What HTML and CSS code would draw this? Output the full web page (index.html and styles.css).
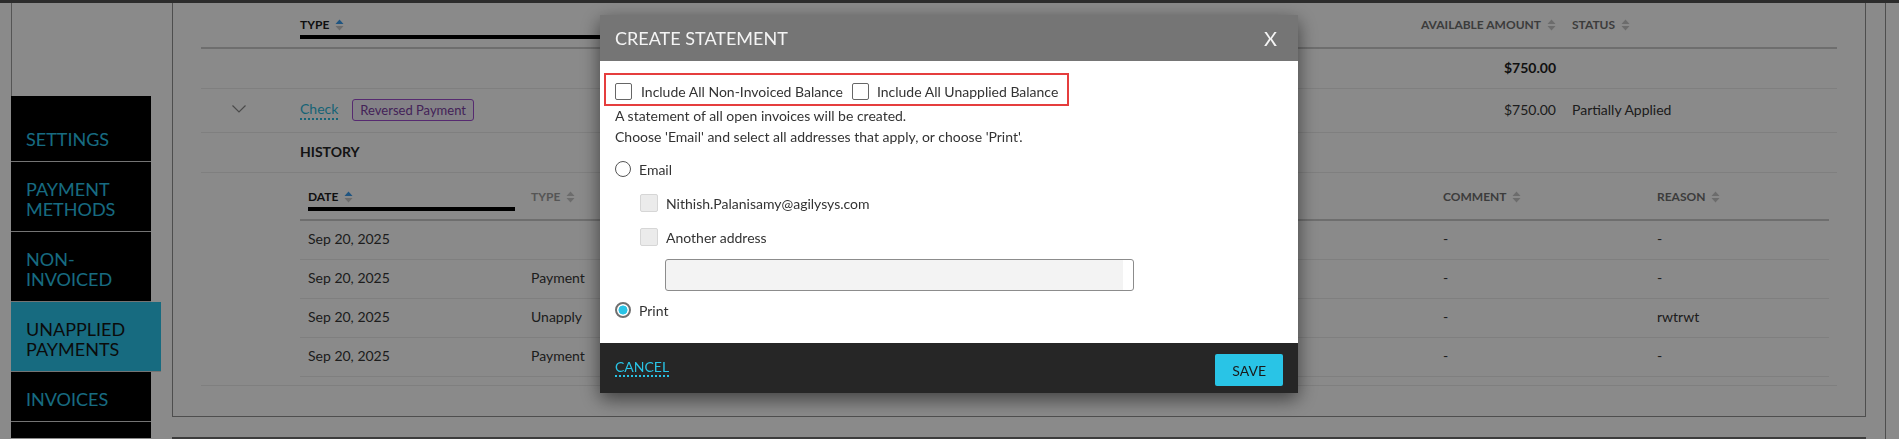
FILE: index.html
```html
<!DOCTYPE html>
<html lang="en">
<head>
<meta charset="utf-8">
<title>Unapplied Payments - Create Statement</title>
<link rel="stylesheet" href="styles.css">
</head>
<body>
<div class="app">
  <div class="topbar"></div>
  <div class="main">
    <nav class="sidebar">
      <div class="side-top"></div>
      <a class="nav-item first">SETTINGS</a>
      <a class="nav-item">PAYMENT<br>METHODS</a>
      <a class="nav-item">NON-<br>INVOICED</a>
      <a class="nav-item active">UNAPPLIED<br>PAYMENTS</a>
      <a class="nav-item">INVOICES</a>
      <a class="nav-item last">&nbsp;</a>
    </nav>
    <section class="content">
      <div class="card">
        <div class="t-head">
          <div class="c-exp"></div>
          <div class="c-type th sorted"><div class="th-in"><span class="lbl-active">TYPE</span><svg class="sort" viewBox="0 0 9 12" width="9" height="12"><path class="up on" d="M0.5 5 L4.5 0.5 L8.5 5Z"/><path class="dn" d="M0.5 7 L4.5 11.5 L8.5 7Z"/></svg></div></div>
          <div class="c-fill"></div>
          <div class="c-amt th"><div class="th-in right"><span>AVAILABLE AMOUNT</span><svg class="sort" viewBox="0 0 9 12" width="9" height="12"><path class="up" d="M0.5 5 L4.5 0.5 L8.5 5Z"/><path class="dn" d="M0.5 7 L4.5 11.5 L8.5 7Z"/></svg></div></div>
          <div class="c-status th"><div class="th-in"><span>STATUS</span><svg class="sort" viewBox="0 0 9 12" width="9" height="12"><path class="up" d="M0.5 5 L4.5 0.5 L8.5 5Z"/><path class="dn" d="M0.5 7 L4.5 11.5 L8.5 7Z"/></svg></div></div>
        </div>
        <div class="t-row total">
          <div class="c-exp"></div>
          <div class="c-type"></div>
          <div class="c-fill"></div>
          <div class="c-amt strong">$750.00</div>
          <div class="c-status"></div>
        </div>
        <div class="t-row main-row">
          <div class="c-exp"><svg class="chev" viewBox="0 0 14 8" width="14" height="8"><path d="M0.5 0.5 L7 7 L13.5 0.5" fill="none"/></svg></div>
          <div class="c-type"><a class="link">Check</a><span class="badge">Reversed Payment</span></div>
          <div class="c-fill"></div>
          <div class="c-amt">$750.00</div>
          <div class="c-status">Partially Applied</div>
        </div>
        <div class="history-title">HISTORY</div>
        <div class="expanded">
          <div class="h-head">
            <div class="h-date th sorted"><div class="th-in"><span class="lbl-active">DATE</span><svg class="sort" viewBox="0 0 9 12" width="9" height="12"><path class="up on" d="M0.5 5 L4.5 0.5 L8.5 5Z"/><path class="dn" d="M0.5 7 L4.5 11.5 L8.5 7Z"/></svg></div></div>
            <div class="h-type th"><div class="th-in"><span class="lbl-light">TYPE</span><svg class="sort" viewBox="0 0 9 12" width="9" height="12"><path class="up" d="M0.5 5 L4.5 0.5 L8.5 5Z"/><path class="dn" d="M0.5 7 L4.5 11.5 L8.5 7Z"/></svg></div></div>
            <div class="h-fill"></div>
            <div class="h-comment th"><div class="th-in"><span>COMMENT</span><svg class="sort" viewBox="0 0 9 12" width="9" height="12"><path class="up" d="M0.5 5 L4.5 0.5 L8.5 5Z"/><path class="dn" d="M0.5 7 L4.5 11.5 L8.5 7Z"/></svg></div></div>
            <div class="h-reason th"><div class="th-in"><span>REASON</span><svg class="sort" viewBox="0 0 9 12" width="9" height="12"><path class="up" d="M0.5 5 L4.5 0.5 L8.5 5Z"/><path class="dn" d="M0.5 7 L4.5 11.5 L8.5 7Z"/></svg></div></div>
          </div>
          <div class="h-row"><div class="h-date">Sep 20, 2025</div><div class="h-type"></div><div class="h-fill"></div><div class="h-comment">-</div><div class="h-reason">-</div></div>
          <div class="h-row"><div class="h-date">Sep 20, 2025</div><div class="h-type">Payment</div><div class="h-fill"></div><div class="h-comment">-</div><div class="h-reason">-</div></div>
          <div class="h-row"><div class="h-date">Sep 20, 2025</div><div class="h-type">Unapply</div><div class="h-fill"></div><div class="h-comment">-</div><div class="h-reason">rwtrwt</div></div>
          <div class="h-row"><div class="h-date">Sep 20, 2025</div><div class="h-type">Payment</div><div class="h-fill"></div><div class="h-comment">-</div><div class="h-reason">-</div></div>
        </div>
      </div>
      <div class="card-next"></div>
    </section>
    <div class="scroll-edge"></div>
  </div>
</div>

<div class="backdrop"></div>

<div class="modal">
  <div class="modal-head">
    <span class="modal-title">CREATE STATEMENT</span>
    <span class="modal-close">X</span>
  </div>
  <div class="modal-body">
    <div class="highlight">
      <span class="cb"></span><span class="cb-label">Include All Non-Invoiced Balance</span>
      <span class="cb second"></span><span class="cb-label">Include All Unapplied Balance</span>
    </div>
    <p class="info">A statement of all open invoices will be created.<br>Choose 'Email' and select all addresses that apply, or choose 'Print'.</p>
    <div class="opt email"><span class="radio"></span><span>Email</span></div>
    <div class="sub first-sub"><span class="cb disabled"></span><span class="sub-label">Nithish.Palanisamy@agilysys.com</span></div>
    <div class="sub second-sub"><span class="cb disabled"></span><span class="sub-label">Another address</span></div>
    <div class="addr"></div>
    <div class="opt print"><span class="radio checked"></span><span>Print</span></div>
  </div>
  <div class="modal-foot">
    <a class="cancel">CANCEL</a>
    <button class="save">SAVE</button>
  </div>
</div>
</body>
</html>
```

FILE: styles.css
```css
* { box-sizing: border-box; }
html, body { margin: 0; padding: 0; }
body {
  width: 1899px;
  height: 439px;
  overflow: hidden;
  background: #ffffff;
  font-family: "Lato", "Liberation Sans", sans-serif;
  color: #333333;
}

.app { display: flex; flex-direction: column; height: 439px; overflow: hidden; }
.topbar { height: 3px; background: #525252; flex: none; }
.main { display: flex; flex: 1; align-items: flex-start; overflow: hidden; }

/* sidebar */
.sidebar { width: 150px; margin-left: 11px; display: flex; flex-direction: column; flex: none; }
.side-top { height: 93px; border-left: 1px solid #9e9e9e; }
.nav-item {
  display: block;
  width: 125px;
  background: #000000;
  color: #2bc6ed;
  font-size: 18px;
  line-height: 20px;
  padding: 17px 0 12px 15px;
  border-bottom: 1px solid #d6d6d6;
  box-sizing: content-box;
  text-decoration: none;
}
.nav-item.first { padding-top: 33px; }
.nav-item.last { height: 10px; padding: 6px 0 0 15px; border-bottom: 0; }
.nav-item.active { background: #2bc6ed; color: #151515; width: 135px; }

/* content */
.content { margin-left: 11px; width: 1694px; flex: none; }
.card {
  border: 1px solid #909090;
  border-top: 0;
  padding: 0 28px 30px 28px;
}
.card-next { margin-top: 20px; border-top: 2px solid #707070; height: 2px; }
.scroll-edge { margin-left: 19px; width: 1px; height: 436px; background: #909090; flex: none; }

.th { font-size: 12px; font-weight: 700; color: #707070; align-items: flex-start; }
.th-in { flex: 1; display: flex; align-items: center; line-height: 16px; padding-bottom: 2px; border-bottom: 4px solid transparent; }
.th-in.right { justify-content: flex-end; }
.sorted .th-in { border-bottom-color: #000000; }
.lbl-active { color: #1c1c1c; }
.lbl-light { color: #9e9e9e; }
.sort { margin-left: 6px; flex: none; }
.sort path { fill: #c8c8c8; }
.sort path.on { fill: #3a9def; }

.t-head { display: flex; align-items: flex-start; height: 46px; border-bottom: 2px solid #cccccc; padding-top: 14px; }
.t-row { display: flex; align-items: center; border-bottom: 1px solid #ebebeb; font-size: 14px; color: #363636; padding-bottom: 2px; }
.t-row.total { height: 40px; }
.t-row.main-row { height: 44px; }
.c-exp { width: 99px; flex: none; padding-left: 31px; display: flex; }
.c-type { width: 330px; flex: none; display: flex; align-items: center; }
.c-fill { flex: 1; }
.c-amt { width: 200px; flex: none; display: flex; justify-content: flex-end; }
.c-status { width: 281px; flex: none; padding-left: 16px; display: flex; }
.strong { font-weight: 700; color: #1e1e1e; }

.chev { margin-top: -2px; }
.chev path { stroke: #8a8a8a; stroke-width: 1.2; }
.link {
  color: #2bb8da;
  border-bottom: 2px dotted #2bb8da;
  line-height: 17px;
  padding-bottom: 1px;
}
.badge {
  margin-left: 14px;
  height: 22px;
  line-height: 20px;
  padding: 0 7px;
  font-size: 13px;
  color: #7c3fa3;
  border: 1px solid #9f4fd0;
  border-radius: 3px;
  background: #f4f0fa;
}

.history-title {
  height: 40px;
  line-height: 37px;
  padding-left: 99px;
  font-size: 14px;
  font-weight: 700;
  color: #262626;
  border-bottom: 1px solid #ebebeb;
}

.expanded { padding: 0 8px 8px 99px; border-bottom: 1px solid #ebebeb; }
.h-head { display: flex; align-items: flex-start; height: 48px; padding-top: 16px; border-bottom: 2px solid #cccccc; }
.h-row { display: flex; align-items: center; height: 39px; border-bottom: 1px solid #ebebeb; font-size: 14px; color: #363636; padding-bottom: 3px; }
.h-date { width: 223px; flex: none; padding: 0 8px; display: flex; }
.h-type { width: 200px; flex: none; padding: 0 8px; display: flex; }
.h-fill { flex: 1; }
.h-comment { width: 214px; flex: none; padding: 0 8px; display: flex; }
.h-reason { width: 180px; flex: none; padding: 0 8px; display: flex; }

/* overlay */
.backdrop { position: fixed; inset: 0; background: rgba(0, 0, 0, 0.46); }

.modal {
  position: fixed;
  left: 600px;
  top: 15px;
  width: 698px;
  background: #ffffff;
  box-shadow: 0 6px 18px rgba(0, 0, 0, 0.55);
}
.modal-head {
  height: 46px;
  background: #757575;
  display: flex;
  align-items: center;
  justify-content: space-between;
  padding: 0 21px 0 15px;
  color: #f4f4f4;
}
.modal-title { font-size: 18px; }
.modal-close { font-size: 20px; line-height: 20px; }

.modal-body { padding: 12px 15px 22px 15px; font-size: 14px; color: #333333; }
.highlight {
  display: inline-flex;
  align-items: center;
  margin-left: -11px;
  height: 33px;
  padding: 4px 9px 0 9px;
  border: 2px solid #e53d3d;
}
.cb {
  display: inline-block;
  width: 17px;
  height: 17px;
  border: 1px solid #666666;
  border-radius: 2px;
  background: #ffffff;
  flex: none;
}
.cb.second { margin-left: 9px; }
.cb-label { margin-left: 9px; line-height: 21px; }
.cb-label + .cb + .cb-label { margin-left: 8px; }
.info { margin: -1px 0 0 0; line-height: 21px; }

.opt { display: flex; align-items: center; height: 22px; }
.opt.email { margin-top: 11px; }
.opt.print { margin-top: 8px; }
.radio {
  width: 16px;
  height: 16px;
  border-radius: 50%;
  border: 1.5px solid #555555;
  margin-right: 8px;
  flex: none;
  background: #ffffff;
}
.radio.checked {
  border: 2px solid #707070;
  background: radial-gradient(circle, #29c4e6 0 4.2px, #ffffff 4.8px);
}

.sub { display: flex; align-items: center; height: 22px; margin-left: 25px; }
.first-sub { margin-top: 12px; }
.second-sub { margin-top: 12px; }
.cb.disabled { width: 18px; height: 18px; background: #ebebeb; border-color: #d6d6d6; }
.sub-label { margin-left: 8px; }
.addr {
  margin: 11px 0 0 50px;
  width: 469px;
  height: 32px;
  border: 1px solid #8c8c8c;
  border-radius: 3px;
  background: linear-gradient(to right, #f3f3f3 calc(100% - 10px), #ffffff 0);
}

.modal-foot {
  height: 50px;
  background: #262626;
  display: flex;
  align-items: center;
  justify-content: space-between;
  padding: 0 15px;
}
.cancel {
  color: #29c4e6;
  font-size: 14px;
  line-height: 17px;
  border-bottom: 2px dotted #29c4e6;
  margin-top: -2px;
}
.save {
  height: 32px;
  padding: 0 17px;
  margin-top: 4px;
  border: 0;
  border-radius: 2px;
  background: #29c4e6;
  color: #1a1a1a;
  font-family: "Lato", "Liberation Sans", sans-serif;
  font-size: 14px;
}
```
